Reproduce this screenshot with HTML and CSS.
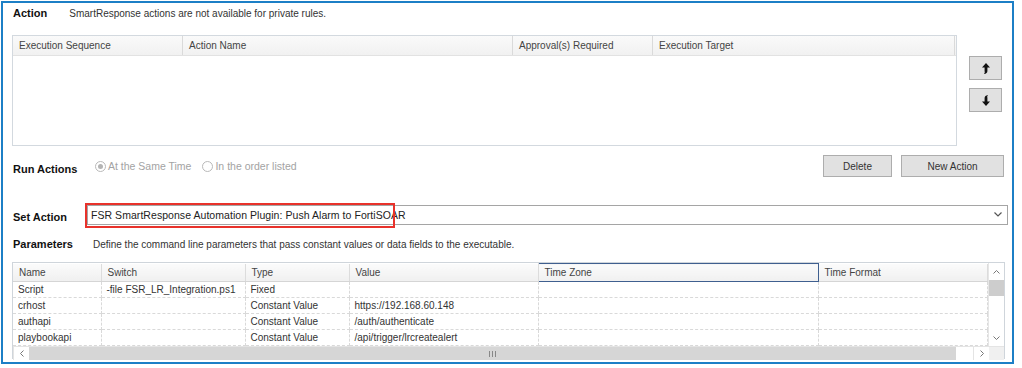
FILE: index.html
```html
<!DOCTYPE html>
<html lang="en">
<head>
    <meta charset="UTF-8">
    <title>SmartResponse Action</title>
    <link rel="stylesheet" href="styles.css">
</head>
<body>
    <div class="frame">
        <div class="head-row">
            <span class="label">Action</span>
            <span class="note">SmartResponse actions are not available for private rules.</span>
        </div>

        <div class="actions-area">
            <div class="action-grid">
                <div class="grid-head">
                    <div class="hcell c-seq">Execution Sequence</div>
                    <div class="hcell c-name">Action Name</div>
                    <div class="hcell c-appr">Approval(s) Required</div>
                    <div class="hcell c-target">Execution Target</div>
                </div>
            </div>
            <div class="move-btns">
                <button class="move-btn" title="Move up">
                    <svg width="8" height="11" viewBox="0 0 8 11"><path d="M4 0 L8 4.5 L5.4 4.5 L5.4 8 Q5.4 10.5 2 11 Q3.3 9.5 2.6 8 L2.6 4.5 L0 4.5 Z" fill="#111"/></svg>
                </button>
                <button class="move-btn" title="Move down">
                    <svg width="8" height="11" viewBox="0 0 8 11"><path d="M4 11 L0 6.5 L2.6 6.5 L2.6 3 Q2.6 0.5 6 0 Q4.7 1.5 5.4 3 L5.4 6.5 L8 6.5 Z" fill="#111"/></svg>
                </button>
            </div>
        </div>

        <div class="run-row">
            <span class="label run-label">Run Actions</span>
            <label class="radio"><span class="dot checked"></span>At the Same Time</label>
            <label class="radio"><span class="dot"></span>In the order listed</label>
            <div class="run-btns">
                <button class="btn btn-delete">Delete</button>
                <button class="btn btn-new">New Action</button>
            </div>
        </div>

        <div class="set-row">
            <span class="label set-label">Set Action</span>
            <div class="combo">
                <span class="combo-text">FSR SmartResponse Automation Plugin: Push Alarm to FortiSOAR</span>
                <svg class="chevron" width="8" height="5" viewBox="0 0 8 5"><path d="M0.5 0.5 L4 4 L7.5 0.5" fill="none" stroke="#555" stroke-width="1.2"/></svg>
                <div class="highlight"></div>
            </div>
        </div>

        <div class="params-head">
            <span class="label">Parameters</span>
            <span class="note params-note">Define the command line parameters that pass constant values or data fields to the executable.</span>
        </div>

        <div class="param-grid">
            <div class="param-main">
                <table class="param-table">
                    <colgroup>
                        <col style="width: 88px">
                        <col style="width: 144px">
                        <col style="width: 104px">
                        <col style="width: 189px">
                        <col style="width: 280px">
                        <col>
                    </colgroup>
                    <thead>
                        <tr>
                            <th>Name</th>
                            <th>Switch</th>
                            <th>Type</th>
                            <th>Value</th>
                            <th class="focused">Time Zone</th>
                            <th>Time Format</th>
                        </tr>
                    </thead>
                    <tbody>
                        <tr><td>Script</td><td>-file FSR_LR_Integration.ps1</td><td>Fixed</td><td></td><td></td><td></td></tr>
                        <tr><td>crhost</td><td></td><td>Constant Value</td><td>https://192.168.60.148</td><td></td><td></td></tr>
                        <tr><td>authapi</td><td></td><td>Constant Value</td><td>/auth/authenticate</td><td></td><td></td></tr>
                        <tr><td>playbookapi</td><td></td><td>Constant Value</td><td>/api/trigger/lrcreatealert</td><td></td><td></td></tr>
                    </tbody>
                </table>
                <div class="vscroll">
                    <div class="sb-btn">
                        <svg width="7" height="4" viewBox="0 0 7 4"><path d="M0.5 3.5 L3.5 0.5 L6.5 3.5" fill="none" stroke="#777" stroke-width="1"/></svg>
                    </div>
                    <div class="vthumb"></div>
                    <div class="vtrack"></div>
                    <div class="sb-btn">
                        <svg width="7" height="4" viewBox="0 0 7 4"><path d="M0.5 0.5 L3.5 3.5 L6.5 0.5" fill="none" stroke="#777" stroke-width="1"/></svg>
                    </div>
                </div>
            </div>
            <div class="hscroll">
                <div class="sb-btn sb-h">
                    <svg width="4" height="7" viewBox="0 0 4 7"><path d="M3.5 0.5 L0.5 3.5 L3.5 6.5" fill="none" stroke="#777" stroke-width="1"/></svg>
                </div>
                <div class="hthumb">
                    <svg width="7" height="6" viewBox="0 0 7 6"><path d="M0.5 0 V6 M3.5 0 V6 M6.5 0 V6" stroke="#888" stroke-width="1"/></svg>
                </div>
                <div class="htrack"></div>
                <div class="sb-btn sb-h">
                    <svg width="4" height="7" viewBox="0 0 4 7"><path d="M0.5 0.5 L3.5 3.5 L0.5 6.5" fill="none" stroke="#777" stroke-width="1"/></svg>
                </div>
                <div class="corner"></div>
            </div>
        </div>
    </div>
</body>
</html>
```

FILE: styles.css
```css
* {
    margin: 0;
    padding: 0;
    box-sizing: border-box;
}

body {
    background: #fff;
    font-family: 'Liberation Sans', Arial, sans-serif;
    font-size: 10px;
    color: #333;
}

.frame {
    margin: 1px 0 0 1px;
    width: 1013px;
    height: 363px;
    border: 2px solid #1c7fc6;
    padding: 0 0 0 9px;
}

.label {
    font-weight: bold;
    color: #111;
    font-size: 11px;
    padding-left: 1px;
}

.note {
    color: #333;
}

/* top row */
.head-row {
    display: flex;
    align-items: center;
    height: 20px;
}

.head-row .note {
    margin-left: 22px;
}

/* action grid + move buttons */
.actions-area {
    display: flex;
    margin-top: 12px;
}

.action-grid {
    width: 945px;
    height: 111px;
    border: 1px solid #d3d9df;
    background: #fff;
}

.grid-head {
    display: flex;
    height: 20px;
    background: linear-gradient(#fafafa, #f1f1f1);
    border-bottom: 1px solid #e2e2e2;
}

.hcell {
    padding-left: 6px;
    line-height: 19px;
    border-right: 1px solid #dadada;
    color: #444;
}

.c-seq { width: 170px; }
.c-name { width: 330px; }
.c-appr { width: 140px; }
.c-target { width: 302px; }

.move-btns {
    display: flex;
    flex-direction: column;
    gap: 8px;
    margin: 21px 0 0 12px;
}

.move-btn {
    width: 33px;
    height: 24px;
    background: #e1e1e1;
    border: 1px solid #adadad;
    display: flex;
    align-items: center;
    justify-content: center;
}

/* run actions row */
.run-row {
    display: flex;
    align-items: center;
    height: 22px;
    margin-top: 9px;
}

.run-label {
    margin-top: 5px;
    width: 83px;
}

.radio {
    display: flex;
    align-items: center;
    color: #a3a3a3;
    font-size: 10.5px;
    margin-right: 11px;
}

.dot {
    width: 11px;
    height: 11px;
    border: 1px solid #b9b9b9;
    border-radius: 50%;
    margin-right: 2px;
    display: flex;
    align-items: center;
    justify-content: center;
}

.dot.checked::after {
    content: '';
    width: 5px;
    height: 5px;
    border-radius: 50%;
    background: #b4b4b4;
}

.run-btns {
    display: flex;
    gap: 9px;
    margin-left: auto;
    margin-right: 8px;
}

.btn {
    height: 22px;
    background: #e1e1e1;
    border: 1px solid #adadad;
    font-family: 'Liberation Sans', Arial, sans-serif;
    font-size: 10px;
    color: #333;
}

.btn-delete { width: 69px; }
.btn-new { width: 103px; }

/* set action row */
.set-row {
    display: flex;
    align-items: center;
    height: 25px;
    margin-top: 25px;
}

.set-label {
    width: 75px;
    margin-top: 4px;
}

.combo {
    position: relative;
    display: flex;
    align-items: center;
    width: 921px;
    height: 20px;
    border: 1px solid #a5a5a5;
    background: #fff;
    padding-left: 3px;
}

.combo-text {
    font-size: 10.5px;
    letter-spacing: 0.05px;
    color: #222;
}

.chevron {
    margin-left: auto;
    margin-right: 5px;
}

.highlight {
    position: absolute;
    left: -3px;
    top: -3px;
    width: 310px;
    height: 25px;
    border: 2px solid #e8322b;
    pointer-events: none;
}

/* parameters */
.params-head {
    display: flex;
    align-items: center;
    height: 20px;
    margin-top: 7px;
}

.params-note {
    margin-left: 20px;
}

.param-grid {
    width: 993px;
    height: 97px;
    margin-top: 8px;
    border: 1px solid #cfd5db;
}

.param-main {
    display: flex;
}

.param-table {
    width: 976px;
    table-layout: fixed;
    border-collapse: collapse;
}

.param-table th {
    height: 18px;
    text-align: left;
    font-weight: normal;
    color: #444;
    padding-left: 6px;
    background: linear-gradient(#fbfbfb, #f0f0f0);
    border-right: 1px solid #dcdcdc;
    border-bottom: 1px solid #d5d5d5;
}

.param-table th.focused {
    border: 1px solid #3f5f8f;
}

.param-table td {
    height: 16px;
    padding-left: 5px;
    color: #333;
    white-space: nowrap;
    overflow: hidden;
    border-right: 1px dashed #d9d9d9;
    border-bottom: 1px dashed #d9d9d9;
}

.vscroll {
    width: 16px;
    display: flex;
    flex-direction: column;
    background: #fff;
    border-left: 1px solid #e6e6e6;
}

.sb-btn {
    height: 17px;
    display: flex;
    align-items: center;
    justify-content: center;
    background: #fff;
}

.vthumb {
    height: 16px;
    background: #cdcdcd;
}

.vtrack {
    flex: 1;
}

.hscroll {
    display: flex;
    height: 14px;
    border-top: 1px solid #e4e4e4;
}

.sb-h {
    width: 16px;
    height: 13px;
    border-left: 1px solid #e4e4e4;
}

.hthumb {
    width: 927px;
    background: #d6d6d6;
    display: flex;
    align-items: center;
    justify-content: center;
}

.htrack {
    width: 17px;
    background: #fff;
}

.corner {
    flex: 1;
    background: #f0f0f0;
}
```
